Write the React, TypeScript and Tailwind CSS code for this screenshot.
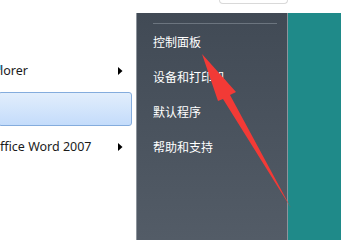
import React from 'react';

const cjk = { fontFamily: '"Noto Sans CJK SC", "Noto Sans", sans-serif' };
const latin = { fontFamily: '"Noto Sans", "Liberation Sans", sans-serif' };

const Caret = () => (
  <svg width="5" height="8" viewBox="0 0 5 8" className="shrink-0">
    <path d="M0 0 L4.5 4 L0 8 Z" fill="#000" />
  </svg>
);

const leftItems = [
  { label: 'lorer', submenu: true, active: false },
  { label: '', submenu: false, active: true },
  { label: 'ffice Word 2007', submenu: true, active: false },
];

const rightItems = ['控制面板', '设备和打印机', '默认程序', '帮助和支持'];

export default function App() {
  return (
    <div className="relative w-[341px] h-[240px] overflow-hidden bg-white flex flex-col">
      {/* top strip with bottom of search box */}
      <div className="h-[13px] shrink-0">
        <div className="ml-[219px] w-[69px] h-[4px] border border-t-0 border-[#d9d9d9] rounded-b-[4px]" />
      </div>

      <div className="flex flex-1">
        {/* left program list */}
        <div className="w-[136px] shrink-0 pt-[41px] flex flex-col gap-[4px]" style={latin}>
          {leftItems.map((it, i) => (
            <div
              key={i}
              className={
                it.active
                  ? 'h-[34px] w-[134px] -ml-[2px] border border-[#84acdd] rounded-[3px] bg-gradient-to-b from-[#e2eefc] to-[#c4dcfb]'
                  : 'h-[34px] flex items-center justify-between pr-[13px] text-[12.5px] text-[#1b1b1b]'
              }
            >
              {!it.active && (
                <>
                  <span className="relative">
                    {i === 0 && <span className="absolute -left-[1px] top-[3px] w-[2px] h-[5px] bg-[#5fd0f0]" />}
                    {it.label}
                  </span>
                  {it.submenu && <Caret />}
                </>
              )}
            </div>
          ))}
        </div>

        {/* right dark pane */}
        <div
          className="w-[152px] shrink-0 border-l border-r border-[#8d949c] bg-gradient-to-b from-[#414a55] to-[#535c67] flex flex-col pt-[10px]"
          style={cjk}
        >
          <div className="ml-[16px] w-[124px] h-[1px] bg-[#6c757f]" />
          <div className="flex flex-col gap-[1px] mt-[1px]">
            {rightItems.map((t) => (
              <div key={t} className="h-[34px] flex items-center pl-[16px] text-[12px] text-white">
                {t}
              </div>
            ))}
          </div>
        </div>

        {/* desktop */}
        <div className="flex-1 bg-[#1f8a89]" />
      </div>

      {/* red annotation arrow */}
      <svg className="absolute inset-0 pointer-events-none" width="341" height="240" viewBox="0 0 341 240">
        <polygon
          points="202,54 236,92 230,95 291,208 223,99 218,101"
          fill="#f23a36"
        />
      </svg>
    </div>
  );
}
